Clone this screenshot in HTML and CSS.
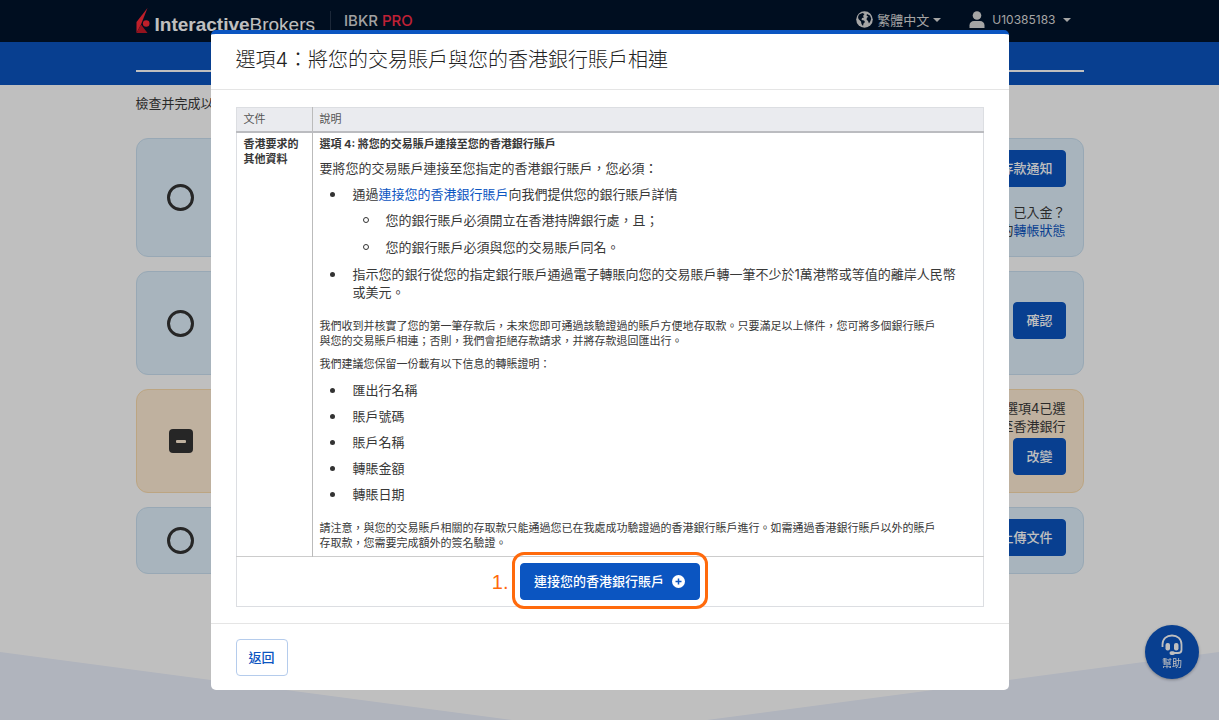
FILE: index.html
```
<!DOCTYPE html>
<html lang="zh-Hant">
<head>
<meta charset="utf-8">
<meta name="viewport" content="width=device-width, initial-scale=1">
<title>選項4：將您的交易賬戶與您的香港銀行賬戶相連</title>
<link rel="stylesheet" href="styles.css">
</head>
<body>
<div class="page">
  <header class="topbar">
    <div class="container topbar-inner">
      <a class="brand" href="#">
        <svg class="brand-mark" viewBox="0 0 14 26" aria-hidden="true"><path d="M11.500 0 L0.500 14 V25 L5 16.500 Z" fill="#ff2a38"/><path d="M0.500 25 L5 16.500 L11.500 25 Z" fill="#c41a28"/><circle cx="10.200" cy="15.500" r="3.300" fill="#ff2a38"/></svg>
        <span class="brand-name"><b>Interactive</b>Brokers</span>
      </a>
      <span class="edition">IBKR <em>PRO</em></span>
      <button class="menu menu-lang" type="button">
        <svg width="17" height="17" viewBox="0 0 17 17" aria-hidden="true"><circle cx="8.500" cy="8.500" r="8.300" fill="currentColor"/><path d="M3 3.500 L6.500 2 L8.500 3 L7 5 L8 6.500 L6 7 L5.500 9 L8 9.500 L9 11 L7.500 12.500 L7 15 L5.500 13 L5 10.500 L2.500 8 L2 6 Z M11 3 L14 4.500 L15.200 7.500 L14.500 10 L13 12.500 L12 10 L10.500 8.500 L11 6.500 L12.500 6 L10.500 4.500 Z" fill="#01132b"/></svg>
        <span>繁體中文</span><i class="caret"></i>
      </button>
      <button class="menu menu-user" type="button">
        <svg width="16" height="17" viewBox="0 0 16 17" aria-hidden="true"><circle cx="8" cy="4.500" r="4.300" fill="currentColor"/><path d="M0.500 17 V14.500 C0.500 11.500 2.500 10 5 10 H11 C13.500 10 15.500 11.500 15.500 14.500 V17 Z" fill="currentColor"/></svg>
        <span>U10385183</span><i class="caret"></i>
      </button>
    </div>
  </header>
  <div class="band"><div class="container band-inner"></div></div>

  <main class="container tasks">
    <p class="intro">檢查并完成以下步驟</p>
    <section class="card">
      <span class="ring"></span>
      <div class="card-side">
        <button class="btn" type="button">提交存款通知</button>
        <p class="spaced">已入金？<br>查看您的<a href="#">轉帳狀態</a></p>
      </div>
    </section>
    <section class="card card-medium">
      <span class="ring"></span>
      <div class="card-side"><button class="btn" type="button">確認</button></div>
    </section>
    <section class="card card-warm">
      <span class="minus"></span>
      <div class="card-side">
        <p>選項4已選<br>至香港銀行</p>
        <button class="btn" type="button">改變</button>
      </div>
    </section>
    <section class="card">
      <span class="ring"></span>
      <div class="card-side"><button class="btn" type="button">上傳文件</button></div>
    </section>
  </main>
  <div class="valley"></div>
</div>

<button class="help" type="button">
  <svg width="22" height="22" viewBox="0 0 22 22" fill="none" stroke="currentColor" stroke-width="1.800" aria-hidden="true"><path d="M1.500 13 V10.500 C1.500 5 5.500 1.500 11 1.500 C16.500 1.500 20.500 5 20.500 10.500 V16 C20.500 18 19 19 17 19 H13"/><rect x="4.500" y="9" width="4.500" height="7.500" rx="2" fill="currentColor" stroke="none"/><rect x="13" y="9" width="4.500" height="7.500" rx="2" fill="currentColor" stroke="none"/><rect x="8.500" y="17.200" width="5.500" height="3.800" rx="1.900" fill="currentColor" stroke="none"/></svg>
  <span>幫助</span>
</button>

<div class="backdrop">
  <div class="modal" role="dialog" aria-modal="true" aria-labelledby="dialog-title">
    <div class="modal-head"><h1 id="dialog-title">選項4：將您的交易賬戶與您的香港銀行賬戶相連</h1></div>
    <div class="modal-body">
      <table class="docs">
        <thead><tr><th class="col-doc">文件</th><th>說明</th></tr></thead>
        <tbody>
          <tr>
            <td class="doc-name">香港要求的<br>其他資料</td>
            <td class="doc-text">
              <h2>選項 4: 將您的交易賬戶連接至您的香港銀行賬戶</h2>
              <p class="lead">要將您的交易賬戶連接至您指定的香港銀行賬戶，您必須：</p>
              <ul class="steps">
                <li>通過<a href="#">連接您的香港銀行賬戶</a>向我們提供您的銀行賬戶詳情
                  <ul class="sub">
                    <li>您的銀行賬戶必須開立在香港持牌銀行處，且；</li>
                    <li>您的銀行賬戶必須與您的交易賬戶同名。</li>
                  </ul>
                </li>
                <li>指示您的銀行從您的指定銀行賬戶通過電子轉賬向您的交易賬戶轉一筆不少於1萬港幣或等值的離岸人民幣<br>或美元。</li>
              </ul>
              <p class="note">我們收到并核實了您的第一筆存款后，未來您即可通過該驗證過的賬戶方便地存取款。只要滿足以上條件，您可將多個銀行賬戶<br>與您的交易賬戶相連；否則，我們會拒絕存款請求，并將存款退回匯出行。</p>
              <p class="note-follow">我們建議您保留一份載有以下信息的轉賬證明：</p>
              <ul class="fields">
                <li>匯出行名稱</li>
                <li>賬戶號碼</li>
                <li>賬戶名稱</li>
                <li>轉賬金額</li>
                <li>轉賬日期</li>
              </ul>
              <p class="note">請注意，與您的交易賬戶相關的存取款只能通過您已在我處成功驗證過的香港銀行賬戶進行。如需通過香港銀行賬戶以外的賬戶<br>存取款，您需要完成額外的簽名驗證。</p>
            </td>
          </tr>
          <tr>
            <td class="action" colspan="2">
              <div class="callout">
                <span class="step">1.</span>
                <button class="btn btn-connect" type="button">連接您的香港銀行賬戶
                  <svg width="13" height="13" viewBox="0 0 13 13" aria-hidden="true"><circle cx="6.500" cy="6.500" r="6.500" fill="#fff"/><path d="M6.500 3.500 V9.500 M3.500 6.500 H9.500" stroke="#0b55c1" stroke-width="1.500"/></svg>
                </button>
              </div>
            </td>
          </tr>
        </tbody>
      </table>
    </div>
    <div class="modal-foot"><button class="btn btn-outline" type="button">返回</button></div>
  </div>
</div>
</body>
</html>
```

FILE: styles.css
```
* { box-sizing: border-box; }

body {
  margin: 0;
  font-family: Inter, "Noto Sans CJK TC", sans-serif;
  font-size: 13px;
  line-height: 18px;
  color: #383838;
}

h1, h2, p, ul { margin: 0; padding: 0; }
ul { list-style: none; }
a { color: #0b55c1; text-decoration: none; }
button { font: inherit; cursor: pointer; }

.page {
  min-height: 100vh;
  display: flex;
  flex-direction: column;
}

.container {
  width: 100%;
  max-width: 948px;
  margin: 0 auto;
}

/* Top bar */
.topbar { background: #01132b; color: #d8d8d8; }
.topbar-inner { display: flex; align-items: center; height: 42px; padding-right: 13px; }
.brand { display: flex; align-items: center; gap: 5px; color: #fff; }
.brand-mark { width: 14px; height: 26px; }
.brand-name { font-family: "Liberation Sans", Arial, sans-serif; font-size: 19px; line-height: 24px; padding-top: 8px; }
.edition {
  margin-left: 15px;
  padding-left: 13px;
  border-left: 1px solid #26364c;
  font-size: 15px;
  line-height: 20px;
  font-weight: 500;
}
.edition em { font-style: normal; color: #ff2d48; }
.menu {
  display: flex;
  align-items: center;
  gap: 4px;
  padding: 0;
  padding-bottom: 3px;
  border: 0;
  background: none;
  color: #dcdcdc;
}
.menu-lang { margin-left: auto; }
.menu-user { margin-left: 28px; gap: 7px; font-size: 12px; }
.caret { border: 4px solid transparent; border-top-color: currentColor; border-bottom: 0; }

.band { background: #0b55c1; height: 43px; }
.band-inner { height: 30px; border-bottom: 2px solid #fff; }

/* Task cards */
.tasks { display: flex; flex-direction: column; gap: 14px; }
.intro { padding-top: 9px; margin-bottom: 12px; }
.card {
  display: flex;
  align-items: center;
  justify-content: space-between;
  padding: 0 17px 0 30px;
  border: 1px solid #cbe1f2;
  border-radius: 12px;
  background: #e0f0fc;
}
.card-warm { background: #ffedd5; border-color: #fbdcae; }
.card-medium { min-height: 104px; }
.card-side {
  display: flex;
  flex-direction: column;
  align-items: flex-end;
  gap: 3px;
  padding: 11px 0 17px;
  text-align: right;
}
.card-warm .card-side { padding-top: 9px; }
.card .spaced { margin-top: 13px; }
.ring { width: 27px; height: 27px; border: 3px solid #333; border-radius: 50%; }
.minus {
  display: flex;
  align-items: center;
  justify-content: center;
  width: 24px;
  height: 24px;
  margin-left: 2px;
  border-radius: 4px;
  background: #333;
}
.minus::before { content: ""; width: 10px; height: 3px; border-radius: 1px; background: #ffedd5; }

.btn {
  display: inline-flex;
  align-items: center;
  justify-content: center;
  height: 37px;
  padding: 0 12px 1px;
  border: 1px solid #0b55c1;
  border-radius: 4px;
  background: #0b55c1;
  color: #fff;
  font-weight: 500;
}
.btn-outline { background: #fff; color: #0b55c1; border-color: #b5ccec; }

.valley {
  height: 68px;
  margin-top: auto;
  background: #ebf0fd;
  clip-path: polygon(0 0, 42% 100%, 58% 100%, 100% 0, 100% 100%, 0 100%);
}

.help {
  position: fixed;
  right: 20px;
  bottom: 41px;
  display: flex;
  flex-direction: column;
  align-items: center;
  justify-content: center;
  width: 54px;
  height: 54px;
  padding: 0;
  border: 0;
  border-radius: 50%;
  background: #0b55c1;
  color: #fff;
  font-size: 10px;
  line-height: 14px;
  box-shadow: 0 1px 3px rgba(0, 0, 0, 0.3);
}

/* Dialog */
.backdrop {
  position: fixed;
  inset: 0;
  display: flex;
  align-items: center;
  justify-content: center;
  background: rgba(0, 0, 0, 0.25);
}
.modal {
  width: 798px;
  max-width: 100%;
  border-top: 4px solid #0b55c1;
  border-radius: 5px;
  background: #fff;
}
.modal-head { padding: 12px 25px 15px; border-bottom: 1px solid #e5e5e5; }
.modal-head h1 { font-size: 20px; line-height: 28px; font-weight: 300; color: #222; }
.modal-body { padding: 17px 25px 16px; }
.modal-foot { padding: 15px 25px 14px; border-top: 1px solid #e5e5e5; display: flex; }

.docs { width: 100%; border-collapse: collapse; border: 1px solid #dcdee2; table-layout: fixed; }
.docs th {
  padding: 4px 7px;
  border-bottom: 2px solid #bbbcc0;
  background: #eaebef;
  font-size: 11px;
  line-height: 15px;
  font-weight: 400;
  text-align: left;
  color: #555;
}
.docs .col-doc { width: 76px; }
.docs th + th, .docs td + td { border-left: 1px solid #bbb; }
.docs td { padding: 4px 7px 5px; vertical-align: top; }
.doc-name, .doc-text h2 { font-size: 11px; line-height: 15px; font-weight: 700; }
.doc-text .lead { margin: 7px 0 8px; }
.doc-text ul { display: flex; flex-direction: column; }
.doc-text .steps, .doc-text .sub { gap: 9px; }
.doc-text .fields { gap: 8px; }
.doc-text li { padding-left: 33px; }
.doc-text .sub { margin-top: 8px; }
.doc-text li::before {
  content: "";
  display: inline-block;
  width: 5px;
  height: 5px;
  margin: 0 18px 2px -23px;
  border-radius: 50%;
  background: #333;
}
.doc-text .sub li::before { width: 6px; height: 6px; margin-right: 17px; border: 1px solid #333; background: none; box-sizing: border-box; }
.doc-text .note { margin-top: 18px; font-size: 11px; line-height: 15px; }
.doc-text .note-follow { margin: 8px 0 9px; font-size: 11px; line-height: 15px; }

.docs .action { padding: 6px 0; border-top: 1px solid #ccc; text-align: center; }
.callout { position: relative; display: inline-flex; vertical-align: top; }
.callout::after {
  content: "";
  position: absolute;
  inset: -11px -8px -9px;
  border: 3px solid #ff6a0c;
  border-radius: 12px;
  pointer-events: none;
}
.step {
  position: absolute;
  right: calc(100% + 11px);
  top: 6px;
  font-family: "Liberation Sans", Arial, sans-serif;
  font-size: 20px;
  line-height: 26px;
  color: #ff6a0c;
}
.btn-connect { min-width: 180px; gap: 8px; }
```
